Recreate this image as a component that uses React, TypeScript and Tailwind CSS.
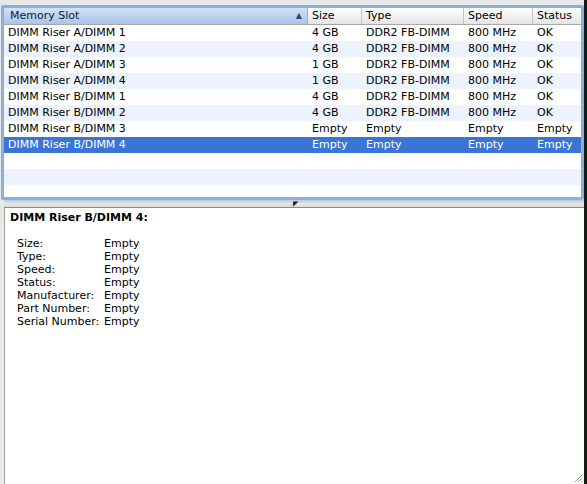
import React from "react";

const rows = [
  ["DIMM Riser A/DIMM 1", "4 GB", "DDR2 FB-DIMM", "800 MHz", "OK"],
  ["DIMM Riser A/DIMM 2", "4 GB", "DDR2 FB-DIMM", "800 MHz", "OK"],
  ["DIMM Riser A/DIMM 3", "1 GB", "DDR2 FB-DIMM", "800 MHz", "OK"],
  ["DIMM Riser A/DIMM 4", "1 GB", "DDR2 FB-DIMM", "800 MHz", "OK"],
  ["DIMM Riser B/DIMM 1", "4 GB", "DDR2 FB-DIMM", "800 MHz", "OK"],
  ["DIMM Riser B/DIMM 2", "4 GB", "DDR2 FB-DIMM", "800 MHz", "OK"],
  ["DIMM Riser B/DIMM 3", "Empty", "Empty", "Empty", "Empty"],
  ["DIMM Riser B/DIMM 4", "Empty", "Empty", "Empty", "Empty"],
];

const details = [
  ["Size:", "Empty"],
  ["Type:", "Empty"],
  ["Speed:", "Empty"],
  ["Status:", "Empty"],
  ["Manufacturer:", "Empty"],
  ["Part Number:", "Empty"],
  ["Serial Number:", "Empty"],
];

const cols = "grid grid-cols-[304px_54px_102px_69px_1fr]";

export default function App() {
  return (
    <div
      className="w-[587px] h-[484px] flex bg-[#e8e8e8] overflow-hidden text-[11px] text-black"
      style={{ fontFamily: '"DejaVu Sans", "Lucida Grande", sans-serif' }}
    >
      <div className="flex-1 flex flex-col pt-[5px] pl-[1px]">
        {/* Table */}
        <div className="h-[195px] border-[3px] border-[#8aaee0] rounded-[2px] bg-white overflow-hidden">
          <div className={`${cols} h-[17px] border-b border-[#a8a8a8] leading-[16px]`}>
            <div className="relative bg-gradient-to-b from-[#d3e2f6] to-[#a9c4ea] border-r border-[#9aaec8] pl-[6px] text-[#0a1c3a]">
              Memory Slot
              <span className="absolute right-[5px] top-[0px] text-[8px] text-[#2a4a78]">▲</span>
            </div>
            {["Size", "Type", "Speed", "Status"].map((h, i) => (
              <div
                key={h}
                className={`bg-gradient-to-b from-[#ffffff] to-[#e4e4e4] pl-[4px] ${i < 3 ? "border-r border-[#c4c4c4]" : ""}`}
              >
                {h}
              </div>
            ))}
          </div>
          {rows.map((r, i) => {
            const sel = i === rows.length - 1;
            return (
              <div
                key={i}
                className={`${cols} h-[16px] leading-[16px] ${
                  sel ? "bg-[#3a75d6] text-white" : i % 2 === 1 ? "bg-[#edf3fe]" : "bg-white"
                }`}
              >
                {r.map((c, j) => (
                  <div key={j} className="pl-[4px] whitespace-nowrap overflow-hidden">
                    {c}
                  </div>
                ))}
              </div>
            );
          })}
          <div className="h-[16px] bg-white" />
          <div className="h-[16px] bg-[#edf3fe]" />
          <div className="h-[16px] bg-white" />
        </div>

        {/* Splitter */}
        <div className="relative h-[8px] bg-gradient-to-b from-[#b9cbe2] via-[#e6e6e6] to-[#dcdcdc] border-b border-[#8a8a8a] ml-[3px]">
          <span className="absolute left-[289px] top-[0px] text-[7px] leading-[8px] text-[#222]">◤</span>
        </div>

        {/* Detail panel */}
        <div className="relative flex-1 ml-[3px] bg-white border-l border-[#a0a0a0] pl-[5px] pt-[3px]">
          <div className="font-bold leading-[14px]">DIMM Riser B/DIMM 4:</div>
          <div className="mt-[12px] pl-[7px]">
            {details.map(([k, v]) => (
              <div key={k} className="flex leading-[13px]">
                <div className="w-[87px]">{k}</div>
                <div>{v}</div>
              </div>
            ))}
          </div>
          <svg className="absolute right-[1px] bottom-[1px]" width="10" height="10" viewBox="0 0 10 10">
            <path d="M9 2 L2 9 M9 5 L5 9 M9 8 L8 9" stroke="#999" strokeWidth="1" />
          </svg>
        </div>
      </div>
      <div className="w-[3px] bg-[#121a12]" />
    </div>
  );
}
